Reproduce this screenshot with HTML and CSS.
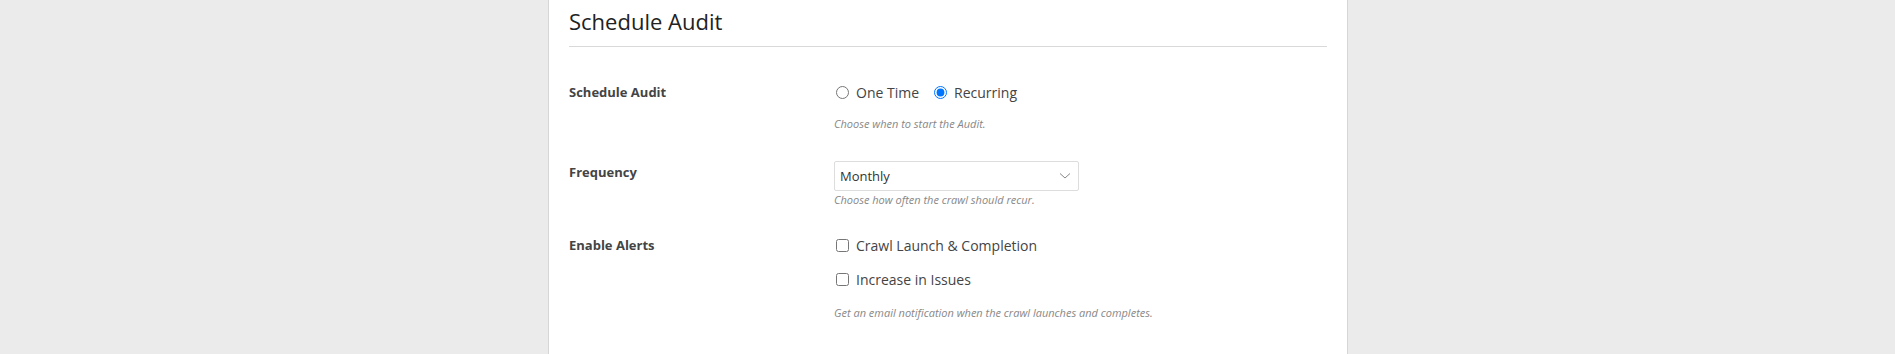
FILE: index.html
```html
<html>
<head>
    <link rel="stylesheet" href="styles.css">
</head>
<body>
    <div class="panel">
        <div class="title">Schedule Audit</div>
        <div class="form">
            <div class="row">
                <div class="label">Schedule Audit</div>
                <div class="field">
                    <div class="options">
                        <label class="option"><input type="radio" name="when"> One Time</label>
                        <label class="option"><input type="radio" name="when" checked> Recurring</label>
                    </div>
                    <div class="help help-gap">Choose when to start the Audit.</div>
                </div>
            </div>
            <div class="row">
                <div class="label label-select">Frequency</div>
                <div class="field">
                    <div class="select">
                        <span>Monthly</span>
                        <svg width="12" height="8" viewBox="0 0 12 8"><path d="M1 1.5 L6 6 L11 1.5" fill="none" stroke="#888" stroke-width="1"/></svg>
                    </div>
                    <div class="help">Choose how often the crawl should recur.</div>
                </div>
            </div>
            <div class="row">
                <div class="label">Enable Alerts</div>
                <div class="field">
                    <label class="check"><input type="checkbox"> Crawl Launch &amp; Completion</label>
                    <label class="check"><input type="checkbox"> Increase in Issues</label>
                    <div class="help help-gap">Get an email notification when the crawl launches and completes.</div>
                </div>
            </div>
        </div>
    </div>
</body>
</html>
```

FILE: styles.css
```css
body {
    margin: 0;
    background-color: #ebebeb;
    font-family: "Open Sans", Arial, sans-serif;
    color: #333;
}
.panel {
    width: 758px;
    margin-left: 548px;
    padding: 0 20px;
    height: 354px;
    background: #ffffff;
    border-left: 1px solid #d6d6d6;
    border-right: 1px solid #d6d6d6;
}
.title {
    font-size: 22px;
    line-height: 30px;
    color: #222;
    padding-top: 6px;
    padding-bottom: 10px;
    border-bottom: 1px solid #d9d9d9;
}
.form {
    padding-top: 33px;
}
.row {
    display: grid;
    grid-template-columns: 265px 1fr;
    margin-bottom: 26px;
}
.label {
    font-size: 13px;
    line-height: 18px;
    font-weight: bold;
    color: #444;
    padding-top: 3px;
}
.label-select {
    padding-top: 2px;
}
.options {
    display: flex;
    gap: 13px;
}
.option, .check {
    display: flex;
    align-items: center;
    font-size: 14px;
    color: #444;
    height: 24px;
}
.option input, .check input {
    margin: 0 7px 0 2px;
    width: 13px;
    height: 13px;
}
.check {
    margin-bottom: 10px;
}
.check:last-of-type {
    margin-bottom: 0;
}
.help {
    font-size: 11px;
    line-height: 15px;
    font-style: italic;
    color: #888;
    margin-top: 1px;
}
.help-gap {
    margin-top: 14px;
    margin-bottom: 4px;
}
.options + .help-gap {
    margin-top: 12px;
}
.select {
    width: 231px;
    height: 28px;
    border: 1px solid #dddddd;
    border-radius: 2px;
    display: flex;
    align-items: center;
    justify-content: space-between;
    padding: 0 7px 0 5px;
    font-size: 13px;
    color: #333;
}
```
